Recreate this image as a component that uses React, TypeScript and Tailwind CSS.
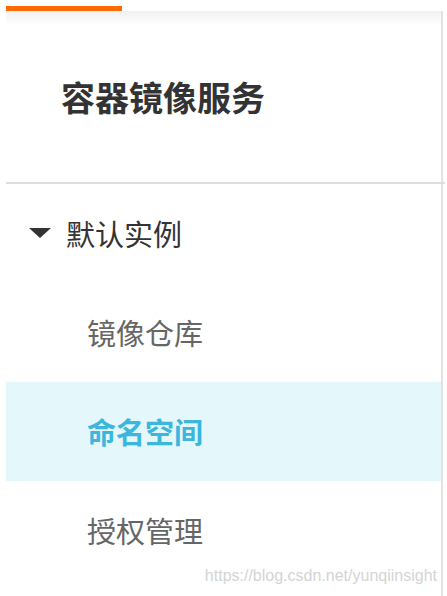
const items = [
  { label: '镜像仓库', active: false },
  { label: '命名空间', active: true },
  { label: '授权管理', active: false },
];

export default function App() {
  return (
    <div
      className="relative h-[596px] w-[447px] overflow-hidden bg-white pl-[6px]"
      style={{ fontFamily: '"Noto Sans CJK SC", "Noto Sans", sans-serif' }}
    >
      {/* top accent */}
      <div className="mt-[6px] h-[5px] w-[116px] bg-[#ff6a00]" />

      {/* sidebar panel */}
      <div className="h-[585px] w-[437px] border-r-2 border-[#e2e2e2]">
        <div className="flex h-[171px] items-center bg-[linear-gradient(to_bottom,#f1f1f1,#ffffff_15px)] pl-[55px]">
          <span className="text-[34px] font-bold leading-none text-[#333]">容器镜像服务</span>
        </div>
        <div className="-mr-1 h-[2px] bg-[#dedede]" />

        <div className="flex h-[99px] items-center pl-[23px]">
          <svg width="22" height="11" viewBox="0 0 22 11" className="mr-[15px]">
            <polygon points="0,0 22,0 11,10" fill="#333" />
          </svg>
          <span className="text-[29px] leading-none text-[#333]">默认实例</span>
        </div>

        {items.map((it) => (
          <div
            key={it.label}
            className={
              it.active
                ? 'flex h-[99px] items-center bg-[#e4f7fb] pl-[81px]'
                : 'flex h-[99px] items-center pl-[81px]'
            }
          >
            <span
              className={
                it.active
                  ? 'text-[29px] font-bold leading-none text-[#3cb6dc]'
                  : 'text-[29px] leading-none text-[#666]'
              }
            >
              {it.label}
            </span>
          </div>
        ))}
      </div>

      {/* watermark */}
      <span
        className="absolute bottom-[8px] right-[10px] text-[16px] text-[#d4d4d4]"
        style={{ fontFamily: '"Liberation Sans", Arial, sans-serif' }}
      >
        https://blog.csdn.net/yunqiinsight
      </span>
    </div>
  );
}
